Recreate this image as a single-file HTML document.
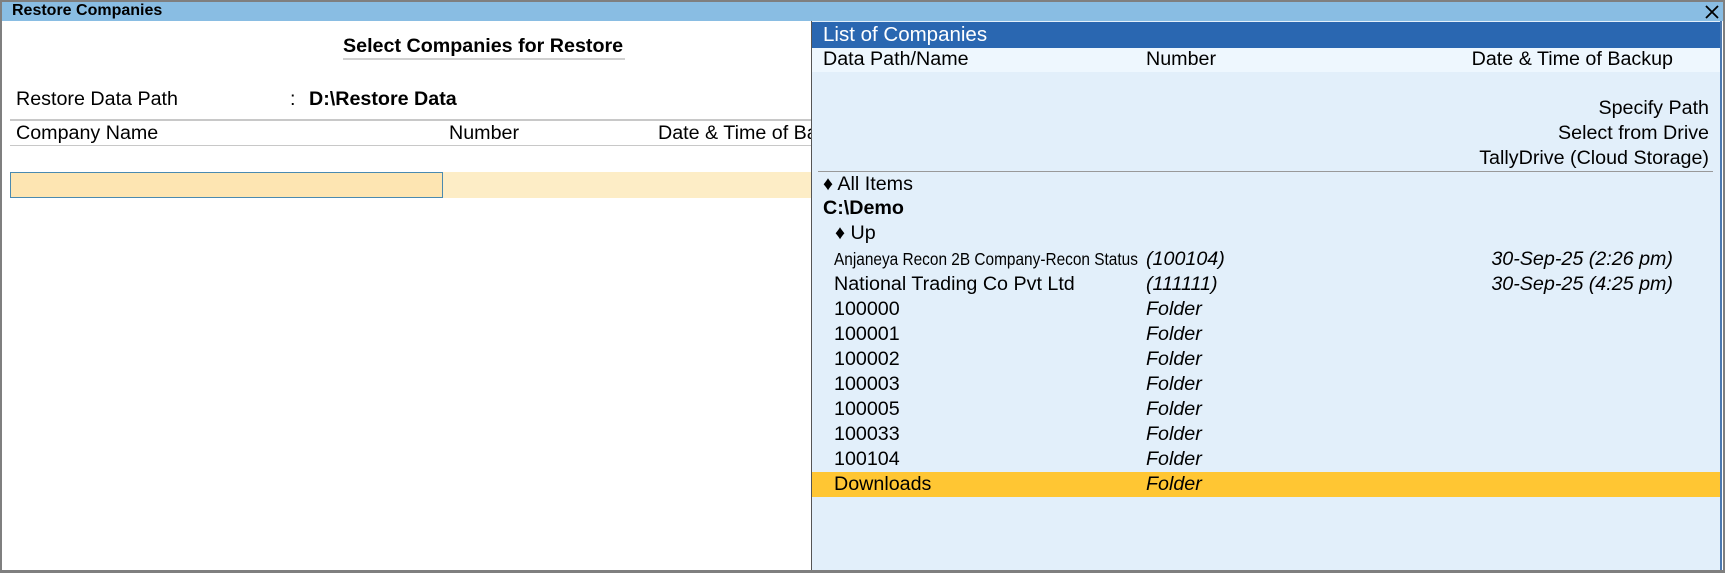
<!DOCTYPE html>
<html><head><meta charset="utf-8"><style>
*{margin:0;padding:0;box-sizing:border-box}
body{width:1725px;height:573px;overflow:hidden;background:#fff;font-family:"Liberation Sans",Arial,sans-serif;color:#000;position:relative}
.a{position:absolute;white-space:nowrap}
.t{font-size:19.7px;line-height:25px}
.i{font-style:italic}
.b{font-weight:bold}
</style></head><body>
<div class="a" style="left:0;top:0;width:1725px;height:573px;border:2px solid #7f7f7f;border-bottom-width:3px"></div>
<div class="a" style="left:2px;top:2px;width:1721px;height:19px;background:#89bde3"></div>
<div class="a b" style="left:12px;top:1px;font-size:16px;line-height:20px">Restore Companies</div>
<svg class="a" style="left:1705px;top:5px" width="14" height="14"><path d="M1 1L13 13M13 1L1 13" stroke="#000" stroke-width="1.8"/></svg>

<!-- left -->
<div class="a b" style="left:343px;top:34px;font-size:19.7px;line-height:25px">Select Companies for Restore</div>
<div class="a" style="left:343px;top:58px;width:282px;height:2px;background:#d0d0d0"></div>
<div class="a t" style="left:16px;top:87px">Restore Data Path</div>
<div class="a t" style="left:290px;top:87px">:</div>
<div class="a t b" style="left:309px;top:87px">D:\Restore Data</div>
<div class="a" style="left:10px;top:119px;width:801px;height:2px;background:#c8c8c8"></div>
<div class="a t" style="left:16px;top:121px">Company Name</div>
<div class="a t" style="left:449px;top:121px">Number</div>
<div class="a" style="left:658px;top:121px;width:153px;overflow:hidden"><span class="t">Date &amp; Time of Backup</span></div>
<div class="a" style="left:10px;top:145px;width:801px;height:1px;background:#c8c8c8"></div>
<div class="a" style="left:442px;top:172px;width:369px;height:26px;background:#fdedc6"></div>
<div class="a" style="left:10px;top:172px;width:433px;height:26px;background:#fde5b2;border:1px solid #4a8ab0"></div>

<!-- right panel -->
<div class="a" style="left:811px;top:21px;width:910px;height:549px;background:#e2effa;border-left:1px solid #555"></div>
<div class="a" style="left:1720px;top:21px;width:2px;height:549px;background:#4a78b0"></div>
<div class="a" style="left:812px;top:22px;width:908px;height:26px;background:#2a67b1"></div>
<div class="a" style="left:823px;top:22px;font-size:20.5px;line-height:26px;color:#fff">List of Companies</div>
<div class="a" style="left:812px;top:48px;width:908px;height:24px;background:#eef7fe"></div>
<div class="a t" style="left:823px;top:47px">Data Path/Name</div>
<div class="a t" style="left:1146px;top:47px">Number</div>
<div class="a t" style="right:52px;top:47px">Date &amp; Time of Backup</div>
<div class="a t" style="right:16px;top:96px">Specify Path</div>
<div class="a t" style="right:16px;top:121px">Select from Drive</div>
<div class="a t" style="right:16px;top:146px">TallyDrive (Cloud Storage)</div>
<div class="a" style="left:818px;top:171px;width:895px;height:1px;background:#999"></div>
<div class="a" style="left:812px;top:472px;width:908px;height:25px;background:#ffc633"></div>
<div class="a t" style="left:823px;top:172px">♦ All Items</div>
<div class="a t b" style="left:823px;top:196px">C:\Demo</div>
<div class="a t" style="left:835px;top:221px">♦ Up</div>
<div class="a t" style="left:834px;top:247px;font-size:17.5px;transform:scaleX(0.88);transform-origin:left">Anjaneya Recon 2B Company-Recon Status</div>
<div class="a t i" style="left:1146px;top:247px">(100104)</div>
<div class="a t i" style="right:52px;top:247px">30-Sep-25 (2:26 pm)</div>
<div class="a t" style="left:834px;top:272px">National Trading Co Pvt Ltd</div>
<div class="a t i" style="left:1146px;top:272px">(111111)</div>
<div class="a t i" style="right:52px;top:272px">30-Sep-25 (4:25 pm)</div>
<div class="a t" style="left:834px;top:297px">100000</div><div class="a t i" style="left:1146px;top:297px">Folder</div>
<div class="a t" style="left:834px;top:322px">100001</div><div class="a t i" style="left:1146px;top:322px">Folder</div>
<div class="a t" style="left:834px;top:347px">100002</div><div class="a t i" style="left:1146px;top:347px">Folder</div>
<div class="a t" style="left:834px;top:372px">100003</div><div class="a t i" style="left:1146px;top:372px">Folder</div>
<div class="a t" style="left:834px;top:397px">100005</div><div class="a t i" style="left:1146px;top:397px">Folder</div>
<div class="a t" style="left:834px;top:422px">100033</div><div class="a t i" style="left:1146px;top:422px">Folder</div>
<div class="a t" style="left:834px;top:447px">100104</div><div class="a t i" style="left:1146px;top:447px">Folder</div>
<div class="a t" style="left:834px;top:472px">Downloads</div><div class="a t i" style="left:1146px;top:472px">Folder</div>
</body></html>
